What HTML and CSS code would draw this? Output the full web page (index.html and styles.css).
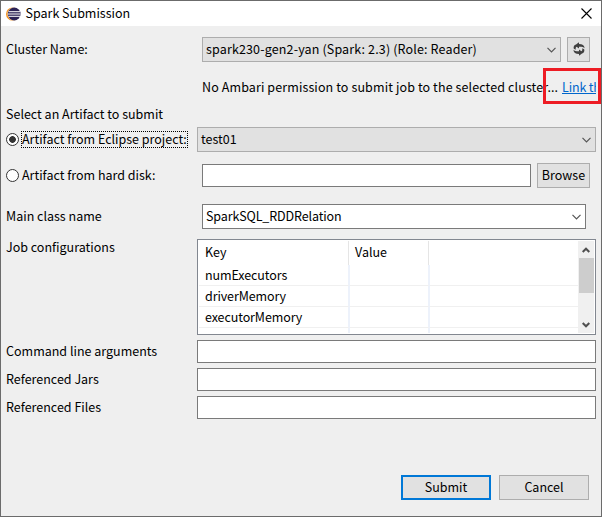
FILE: index.html
```html
<!DOCTYPE html>
<html lang="en">
<head>
<meta charset="utf-8">
<title>Spark Submission</title>
<link rel="stylesheet" href="styles.css">
</head>
<body>
<main class="window">
  <header class="titlebar">
    <svg class="logo" width="15" height="14" viewBox="0 0 15 14">
      <circle cx="6.600" cy="7" r="6.6" fill="#f7941e"/>
      <circle cx="8" cy="7" r="6.5" fill="#fff"/>
      <circle cx="8.200" cy="7" r="6.400" fill="#2c2255"/>
      <path d="M2.500 4.700h11.500M2 7h12.500M2.500 9.300h11.500" stroke="#fff"/>
    </svg>
    <h1>Spark Submission</h1>
    <svg class="close" width="11" height="11" viewBox="0 0 11 11"><path d="M.5.5l10 10M10.5.5l-10 10" stroke="#000" stroke-width="1.1"/></svg>
  </header>

  <section class="row cluster">
    <label>Cluster Name:</label>
    <div class="combo gray"><span class="loose">spark230-gen2-yan (Spark: 2.3) (Role: Reader)</span>
      <svg width="9" height="6" viewBox="0 0 9 6"><path d="M.5.8l4 4 4-4"/></svg></div>
    <button class="refresh"><svg width="12" height="14" viewBox="0 0 12 14" fill="#404040">
      <path d="M6 .3v1.700C9.500 2 11.300 3.300 11.600 6.300 10.300 5 8.500 4.700 6 4.800V6.500L3.600 4.700C2.800 5.200 2.500 6 2.800 7.700L.8 6.700C.2 4.500 1.200 3 3 2.400z"/>
      <path d="M6 13.700v-1.700C2.500 12 .7 10.700.4 7.700 1.700 9 3.500 9.300 6 9.200V7.500L8.400 9.300C9.200 8.800 9.500 8 9.200 6.300L11.200 7.300C11.800 9.500 10.800 11 9 11.600z"/>
    </svg></button>
  </section>

  <section class="row note">
    <span class="message">No Ambari permission to submit job to the selected cluster...</span>
    <a class="link">Link th</a>
    <i class="highlight"></i>
  </section>

  <section class="row heading"><label>Select an Artifact to submit</label></section>

  <section class="row project">
    <label class="option"><i class="radio on"></i><span class="focused">Artifact from Eclipse project:</span></label>
    <div class="combo gray"><span>test01</span>
      <svg width="9" height="6" viewBox="0 0 9 6"><path d="M.5.8l4 4 4-4"/></svg></div>
  </section>

  <section class="row disk">
    <label class="option"><i class="radio"></i><span>Artifact from hard disk:</span></label>
    <div class="input"></div>
    <button class="browse">Browse</button>
  </section>

  <section class="row mainclass">
    <label>Main class name</label>
    <div class="combo"><span class="tight">SparkSQL_RDDRelation</span>
      <svg width="9" height="6" viewBox="0 0 9 6"><path d="M.5.8l4 4 4-4"/></svg></div>
  </section>

  <section class="row config">
    <label>Job configurations</label>
    <div class="table">
      <div class="grid">
        <b>Key</b><b>Value</b><b></b>
        <span>numExecutors</span><span></span><span></span>
        <span>driverMemory</span><span></span><span></span>
        <span>executorMemory</span><span></span><span></span>
        <span></span><span></span><span></span>
      </div>
      <div class="scrollbar">
        <svg width="8" height="6" viewBox="0 0 8 6"><path d="M.7 5L4 1.700 7.300 5"/></svg>
        <i class="thumb"></i>
        <svg width="8" height="6" viewBox="0 0 8 6"><path d="M.7 1L4 4.300 7.300 1"/></svg>
      </div>
    </div>
  </section>

  <section class="row field"><label>Command line arguments</label><div class="input"></div></section>
  <section class="row field"><label>Referenced Jars</label><div class="input"></div></section>
  <section class="row field"><label>Referenced Files</label><div class="input"></div></section>

  <footer class="actions">
    <button class="primary">Submit</button>
    <button>Cancel</button>
  </footer>
</main>
</body>
</html>
```
FILE: styles.css
```css
* { box-sizing: border-box; }

body {
  margin: 0;
  background: #fff;
  color: #000;
  font: 12.5px/18px "Noto Sans CJK SC", "Noto Sans", sans-serif;
  white-space: nowrap;
}

.window {
  width: 602px;
  height: 517px;
  overflow: hidden;
  border: 1px solid #6b6b6b;
  background: #efefef;
}

.titlebar {
  display: flex;
  align-items: center;
  height: 25px;
  padding: 0 9px 0 5px;
  background: #fff;
}
.titlebar h1 { margin: 0 auto 0 4.5px; padding-bottom: 2px; font-size: inherit; font-weight: 400; }

.row { display: flex; align-items: center; padding: 0 5px; }
.row > label { flex: 0 0 191px; }
.row > label:not(.option) { padding-bottom: 1px; }

.combo {
  display: flex;
  align-items: center;
  justify-content: space-between;
  height: 25px;
  padding: 0 4px 0 3px;
  border: 1px solid #7a7a7a;
  background: #fff;
}
.combo span { padding-bottom: 2px; }
.combo.gray { border-color: #adadad; background: #e1e1e1; }
.combo svg { fill: none; stroke: #555; stroke-width: 1.2; }
.loose { letter-spacing: .15px; }
.tight { letter-spacing: -.12px; }

.input { height: 23px; border: 1px solid #7a7a7a; background: #fff; }

button {
  height: 25px;
  padding: 0 0 1px;
  border: 1px solid #adadad;
  background: #e1e1e1;
  color: #000;
  font: inherit;
}

.cluster { height: 25px; margin-top: 11px; }
.cluster > label { flex-basis: 196px; }
.cluster .combo { width: 359px; }
.refresh { display: flex; align-items: center; justify-content: center; width: 23px; margin-left: 6px; }

.note { position: relative; height: 20px; margin-top: 15px; padding-left: 201px; }
.message { flex: 0 0 360px; letter-spacing: .11px; }
.link { width: 34px; overflow: hidden; color: #0066cc; letter-spacing: -.15px; text-decoration: underline; }
.highlight { position: absolute; left: 542px; top: -9px; width: 58px; height: 36px; border: 3px solid #ed1c24; }

.heading { height: 20px; margin-top: 7px; }

.project { height: 25px; margin-top: 3px; }
.project .combo { width: 399px; }
.option { display: flex; align-items: center; }
.radio {
  flex: none;
  width: 13px;
  height: 13px;
  margin-right: 2px;
  border: 1px solid #333;
  border-radius: 50%;
  background: #fff;
}
.radio.on { background: radial-gradient(circle, #333 3px, #fff 3.7px); }
.option span { height: 17px; padding: 0 1px; line-height: 16px; }
.option .focused { width: 167px; border: 1px dotted #000; padding: 0; line-height: 14px; }

.disk { height: 25px; margin-top: 11px; }
.disk > label { flex-basis: 196px; }
.disk .input { width: 329px; }
.browse { width: 53px; margin-left: 6px; }

.mainclass { height: 25px; margin-top: 16px; }
.mainclass > label { flex-basis: 196px; }
.mainclass .combo { width: 384px; }

.config { align-items: flex-start; height: 96px; margin: 10px 0 5px; }
.row.config > label { margin-top: -1px; }
.table { display: flex; width: 399px; height: 96px; padding: 1px; border: 1px solid #828790; background: #fff; }
.grid {
  display: grid;
  grid-template-columns: 151px 80px 148px;
  grid-template-rows: 24px 21px 21px 21px 5px;
  width: 379px;
  height: 92px;
}
.grid b { margin-right: 1px; padding: 2px 0 0 6px; border-right: 1px solid #e5e5e5; font-weight: 400; }
.grid b:nth-child(2) { padding-left: 5px; }
.grid span { padding: 1px 0 0 6px; border-bottom: 1px solid #f0f0f0; border-right: 2px solid #edf2fb; letter-spacing: -.1px; }
.grid > :nth-child(3n) { border-right: 0; }
.grid > :nth-last-child(-n+3) { border-bottom: 0; padding: 0; }
.scrollbar { display: flex; flex-direction: column; align-items: center; width: 16px; height: 92px; background: #f0f0f0; }
.scrollbar svg { flex: none; margin: 6px 0 5px; fill: none; stroke: #505050; stroke-width: 2; }
.scrollbar svg:last-child { margin: auto 0 5px; }
.thumb { width: 15px; height: 35px; background: #cdcdcd; }

.field { height: 23px; margin-bottom: 5px; }
.field .input { width: 399px; }

.actions { display: flex; justify-content: flex-end; gap: 8px; margin-top: 56px; padding-right: 12px; }
.actions button { width: 90px; }
.actions .primary { border: 2px solid #0078d7; }
```
